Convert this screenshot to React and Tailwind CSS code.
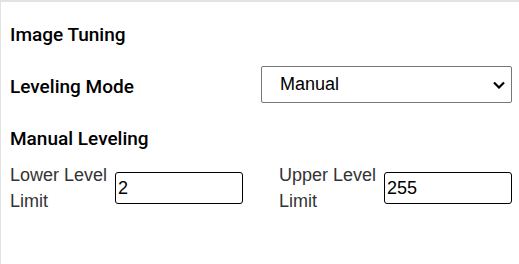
import React from "react";

function Field({ label, value }) {
  return (
    <div className="flex items-center w-[233px]">
      <label className="w-[100px] mr-[5px] text-[18px] leading-[26px] text-[#333]">
        {label}
      </label>
      <input
        defaultValue={value}
        className="w-[128px] h-[32px] border border-black rounded-[3px] px-[2px] text-[18px] text-black outline-none font-['Liberation_Sans',Arial,sans-serif]"
      />
    </div>
  );
}

export default function App() {
  return (
    <div className="w-[519px] h-[264px] bg-white border-t-2 border-l border-[#e3e3e3] font-['Liberation_Sans',Arial,sans-serif] overflow-hidden">
      <div className="pl-[9px] pr-[7px] pt-[21px]">
        <h2 className="font-['Roboto',sans-serif] font-medium text-[19px] leading-[24px] text-black">
          Image Tuning
        </h2>
        <div className="mt-[19px] flex items-center h-[37px]">
          <div className="w-[251px] mt-[5px] font-['Roboto',sans-serif] font-medium text-[19px] leading-[24px] text-black">
            Leveling Mode
          </div>
          <div className="relative w-[251px] h-[37px]">
            <select className="appearance-none w-full h-full border border-[#767676] rounded-[2px] bg-white pl-[18px] text-[18px] text-black outline-none font-['Liberation_Sans',Arial,sans-serif]">
              <option>Manual</option>
              <option>Auto</option>
            </select>
            <svg
              className="absolute right-[7px] top-[15px] pointer-events-none"
              width="12"
              height="8"
              viewBox="0 0 12 8"
            >
              <path d="M1 1.5 L6 6.5 L11 1.5" fill="none" stroke="black" strokeWidth="2.2" />
            </svg>
          </div>
        </div>
        <h3 className="mt-[24px] font-['Roboto',sans-serif] font-medium text-[19px] leading-[24px] text-black">
          Manual Leveling
        </h3>
        <div className="mt-[11px] flex gap-[36px]">
          <Field label="Lower Level Limit" value="2" />
          <Field label="Upper Level Limit" value="255" />
        </div>
      </div>
    </div>
  );
}
